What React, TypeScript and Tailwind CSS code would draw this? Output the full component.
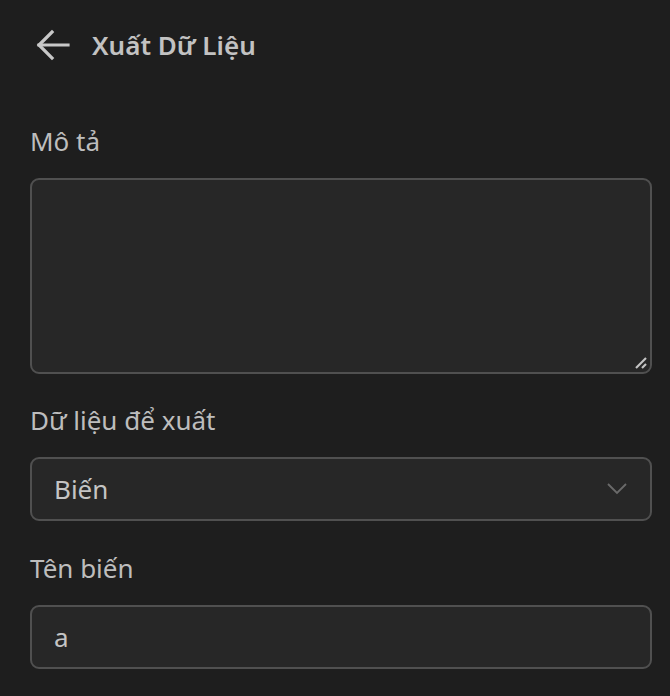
import React from "react";

export default function App() {
  return (
    <div
      className="min-h-[696px] w-[670px] bg-[#1e1e1e] text-[#c4c4c4]"
      style={{ fontFamily: '"Noto Sans", "Open Sans", sans-serif' }}
    >
      <div className="flex items-center gap-[22px] pl-[36px] pt-[29px]">
        <svg width="34" height="32" viewBox="0 0 34 32" fill="none" stroke="#c8c8c8" strokeWidth="3.2" strokeLinecap="square">
          <path d="M3 16 H32" />
          <path d="M16 3 L3 16 L16 29" />
        </svg>
        <span className="text-[26px] font-semibold leading-[32px] text-[#c2c2c2]">Xuất Dữ Liệu</span>
      </div>

      <div className="flex flex-col pl-[30px] pr-[18px] pt-[62px]">
        <label className="text-[26px] leading-[36px] text-[#bdbdbd]">Mô tả</label>
        <div className="relative mt-[19px] h-[196px] rounded-[9px] border-2 border-[#505050] bg-[#272727]">
          <svg className="absolute bottom-[2px] right-[2px]" width="14" height="14" viewBox="0 0 14 14" stroke="#c4c4c4" strokeWidth="2.2">
            <path d="M2 12 L12 2" />
            <path d="M8 12 L12 8" />
          </svg>
        </div>

        <label className="mt-[28px] text-[26px] leading-[36px] text-[#bdbdbd]">Dữ liệu để xuất</label>
        <div className="mt-[19px] flex h-[64px] items-center justify-between rounded-[9px] border-2 border-[#505050] bg-[#272727] pl-[22px] pr-[22px]">
          <span className="text-[26px] text-[#c4c4c4]">Biến</span>
          <svg width="22" height="14" viewBox="0 0 22 14" fill="none" stroke="#6a6a6a" strokeWidth="1.8">
            <path d="M2 2 L11 11 L20 2" />
          </svg>
        </div>

        <label className="mt-[29px] text-[26px] leading-[36px] text-[#bdbdbd]">Tên biến</label>
        <div className="mt-[19px] flex h-[64px] items-center rounded-[9px] border-2 border-[#505050] bg-[#272727] pl-[22px]">
          <span className="text-[26px] text-[#c4c4c4]">a</span>
        </div>
      </div>
    </div>
  );
}
